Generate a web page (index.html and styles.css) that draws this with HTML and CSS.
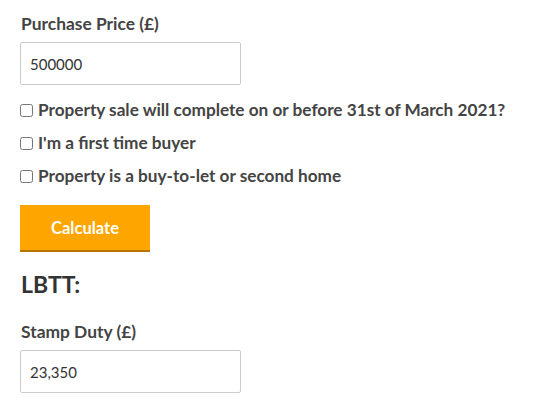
FILE: index.html
```html
<!DOCTYPE html>
<html>
<head>
<meta charset="utf-8">
<link rel="stylesheet" href="styles.css">
</head>
<body>
<form class="calc">
  <div class="field">
    <label class="field-label" for="price">Purchase Price (£)</label>
    <input class="text-input" id="price" type="text" value="500000">
  </div>
  <div class="checks">
    <label class="check"><input type="checkbox" class="check-box">Property sale will complete on or before 31st of March 2021?</label>
    <label class="check"><input type="checkbox" class="check-box">I'm a first time buyer</label>
    <label class="check"><input type="checkbox" class="check-box">Property is a buy-to-let or second home</label>
  </div>
  <button type="button" class="btn">Calculate</button>
  <h2 class="result-title">LBTT:</h2>
  <div class="field">
    <label class="field-label" for="duty">Stamp Duty (£)</label>
    <input class="text-input" id="duty" type="text" value="23,350">
  </div>
</form>
</body>
</html>
```
FILE: styles.css
```css
* { box-sizing: border-box; }
html, body { margin: 0; padding: 0; background: #fff; }
body {
  font-family: "Lato", "Open Sans", sans-serif;
  color: #444;
  padding: 0 20px;
}
.calc { display: flex; flex-direction: column; align-items: flex-start; }
.field { display: flex; flex-direction: column; align-items: flex-start; }
.field-label {
  font-weight: 700;
  font-size: 17.4px;
  line-height: 24px;
  margin-top: 12px;
  padding-left: 1px;
}
.text-input {
  margin-top: 6px;
  width: 221px;
  height: 43px;
  border: 1px solid #ccc;
  border-radius: 2px;
  padding: 0 9px;
  font-family: "Lato", "Open Sans", sans-serif;
  font-size: 15px;
  color: #333;
  background: #fff;
}
.checks { margin-top: 13px; display: flex; flex-direction: column; gap: 9px; }
.check {
  display: flex;
  align-items: center;
  font-weight: 700;
  font-size: 17.2px;
  line-height: 24px;
}
.check-box { margin: 0 5px 0 0; width: 13px; height: 13px; }
.btn {
  margin-top: 17px;
  width: 130px;
  height: 47px;
  background: #ffa500;
  border: 0;
  border-bottom: 2px solid #b87400;
  color: #fff;
  font-family: "Lato", "Open Sans", sans-serif;
  font-weight: 700;
  font-size: 16.5px;
  border-radius: 0;
  padding: 0;
}
.result-title {
  margin: 18px 0 10px;
  padding-left: 1px;
  font-size: 23px;
  line-height: 28px;
  font-weight: 700;
  color: #333;
}
.result-title + .field .field-label { margin-top: 12px; }
.result-title + .field .text-input { margin-top: 6px; }
```
